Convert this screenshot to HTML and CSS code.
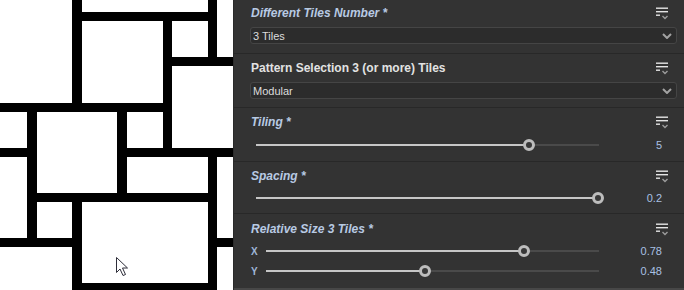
FILE: index.html
```html
<!DOCTYPE html>
<html lang="en">
<head>
    <meta charset="UTF-8">
    <meta name="viewport" content="width=device-width, initial-scale=1.0">
    <title>Tile Generator Parameters</title>
    <link rel="stylesheet" href="styles.css">
</head>
<body>
    <div class="viewport">
        <svg class="pattern" width="233" height="290" viewBox="0 0 233 290">
            <rect x="0" y="0" width="233" height="290" fill="#fff"/>
            <g fill="#000">
                <rect x="72" y="0" width="10" height="112"/>
                <rect x="82" y="12" width="135" height="9"/>
                <rect x="208" y="0" width="9" height="66"/>
                <rect x="163" y="21" width="9" height="136"/>
                <rect x="172" y="57" width="61" height="9"/>
                <rect x="0" y="103" width="172" height="9"/>
                <rect x="27" y="103" width="10" height="144"/>
                <rect x="117" y="103" width="10" height="99"/>
                <rect x="0" y="148" width="27" height="9"/>
                <rect x="127" y="148" width="106" height="9"/>
                <rect x="27" y="193" width="190" height="9"/>
                <rect x="208" y="148" width="9" height="142"/>
                <rect x="72" y="193" width="10" height="97"/>
                <rect x="0" y="238" width="82" height="9"/>
                <rect x="217" y="238" width="16" height="9"/>
                <rect x="72" y="283" width="145" height="7"/>
            </g>
            <!-- mouse pointer -->
            <path d="M116.5 257.5 L116.5 272.5 L120 269 L123 275.5 L125.5 274.5 L122.5 268 L127.5 268 Z" fill="#fff" stroke="#2e2e3a" stroke-width="1"/>
        </svg>
    </div>

    <div class="panel">
        <section class="param param-first">
            <div class="param-head">
                <span class="param-title modified">Different Tiles Number *</span>
                <svg class="menu-icon" width="13" height="13" viewBox="0 0 13 13"><rect x="0" y="0.5" width="12" height="1.4"/><rect x="0" y="4" width="12" height="1.4"/><rect x="0" y="7.5" width="4" height="1.4"/><path d="M6.5 9 L9 11.5 L11.5 9" class="chev"/></svg>
            </div>
            <div class="select">
                <span>3 Tiles</span>
                <svg class="select-arrow" width="10" height="6" viewBox="0 0 10 6"><path d="M1 1 L5 5 L9 1"/></svg>
            </div>
        </section>

        <section class="param">
            <div class="param-head">
                <span class="param-title">Pattern Selection 3 (or more) Tiles</span>
                <svg class="menu-icon" width="13" height="13" viewBox="0 0 13 13"><rect x="0" y="0.5" width="12" height="1.4"/><rect x="0" y="4" width="12" height="1.4"/><rect x="0" y="7.5" width="4" height="1.4"/><path d="M6.5 9 L9 11.5 L11.5 9" class="chev"/></svg>
            </div>
            <div class="select">
                <span>Modular</span>
                <svg class="select-arrow" width="10" height="6" viewBox="0 0 10 6"><path d="M1 1 L5 5 L9 1"/></svg>
            </div>
        </section>

        <section class="param param-slider">
            <div class="param-head">
                <span class="param-title modified">Tiling *</span>
                <svg class="menu-icon" width="13" height="13" viewBox="0 0 13 13"><rect x="0" y="0.5" width="12" height="1.4"/><rect x="0" y="4" width="12" height="1.4"/><rect x="0" y="7.5" width="4" height="1.4"/><path d="M6.5 9 L9 11.5 L11.5 9" class="chev"/></svg>
            </div>
            <div class="slider-row">
                <div class="track"><div class="fill" style="width:79.6%"></div><div class="knob" style="left:79.6%"></div></div>
                <span class="value">5</span>
            </div>
        </section>

        <section class="param param-slider param-short">
            <div class="param-head">
                <span class="param-title modified">Spacing *</span>
                <svg class="menu-icon" width="13" height="13" viewBox="0 0 13 13"><rect x="0" y="0.5" width="12" height="1.4"/><rect x="0" y="4" width="12" height="1.4"/><rect x="0" y="7.5" width="4" height="1.4"/><path d="M6.5 9 L9 11.5 L11.5 9" class="chev"/></svg>
            </div>
            <div class="slider-row">
                <div class="track"><div class="fill" style="width:99.6%"></div><div class="knob" style="left:99.6%"></div></div>
                <span class="value">0.2</span>
            </div>
        </section>

        <section class="param param-slider param-last">
            <div class="param-head">
                <span class="param-title modified">Relative Size 3 Tiles *</span>
                <svg class="menu-icon" width="13" height="13" viewBox="0 0 13 13"><rect x="0" y="0.5" width="12" height="1.4"/><rect x="0" y="4" width="12" height="1.4"/><rect x="0" y="7.5" width="4" height="1.4"/><path d="M6.5 9 L9 11.5 L11.5 9" class="chev"/></svg>
            </div>
            <div class="slider-row slider-labeled">
                <span class="axis">X</span>
                <div class="track"><div class="fill" style="width:77.5%"></div><div class="knob" style="left:77.5%"></div></div>
                <span class="value">0.78</span>
            </div>
            <div class="slider-row slider-labeled">
                <span class="axis">Y</span>
                <div class="track"><div class="fill" style="width:47.7%"></div><div class="knob" style="left:47.7%"></div></div>
                <span class="value">0.48</span>
            </div>
        </section>
        <div class="panel-foot"></div>
    </div>
</body>
</html>
```

FILE: styles.css
```css
html, body {
    margin: 0;
    padding: 0;
}
body {
    display: flex;
    width: 684px;
    height: 290px;
    overflow: hidden;
    font-family: "Liberation Sans", Arial, sans-serif;
    background: #333;
}
.viewport {
    width: 233px;
    height: 290px;
    flex-shrink: 0;
    background: #fff;
}
.pattern {
    display: block;
}
.panel {
    flex: 1;
    display: flex;
    flex-direction: column;
    background: #333333;
    border-left: 1px solid #2a2a2a;
}
.param {
    padding: 6px 7px 8px 16px;
    border-bottom: 1px solid #282828;
}
.param-first {
    padding-top: 5px;
    padding-bottom: 9px;
}
.param-head {
    display: flex;
    align-items: center;
    justify-content: space-between;
    height: 16px;
    padding-right: 8px;
}
.param-title {
    font-size: 12px;
    font-weight: bold;
    color: #e2e2e2;
    padding-left: 1px;
}
.param-title.modified {
    font-style: italic;
    color: #b8cae3;
}
.menu-icon {
    display: block;
    margin-top: 1px;
}
.menu-icon rect {
    fill: #e4e4e4;
}
.menu-icon .chev {
    fill: none;
    stroke: #9c9c9c;
    stroke-width: 1.4;
}
.select {
    display: flex;
    align-items: center;
    justify-content: space-between;
    height: 15px;
    margin-top: 6px;
    padding: 0 4px 0 2px;
    background: #2c2c2c;
    border: 1px solid #454545;
    border-radius: 3px;
    font-size: 11px;
    color: #dcdcdc;
}
.select-arrow path {
    fill: none;
    stroke: #a2a2a2;
    stroke-width: 2;
}
.slider-row {
    display: flex;
    align-items: center;
    height: 14px;
    margin-top: 8px;
    padding-left: 6px;
    padding-right: 15px;
}
.param-short .slider-row {
    margin-top: 7px;
}
.param-slider {
    padding-bottom: 9px;
}
.param-short {
    padding-bottom: 8px;
}
.param-last {
    padding-top: 7px;
    padding-bottom: 9px;
    border-bottom: none;
}
.param-last .slider-row {
    margin-top: 7px;
}
.param-last .slider-row + .slider-row {
    margin-top: 6px;
}
.slider-labeled {
    padding-left: 1px;
}
.axis {
    width: 15px;
    font-size: 10px;
    font-weight: bold;
    color: #9fb6d8;
}
.track {
    position: relative;
    flex: 1;
    height: 2px;
    background: #4a4a4a;
}
.fill {
    height: 2px;
    background: #c6c6c6;
}
.knob {
    position: absolute;
    top: 50%;
    width: 6px;
    height: 6px;
    border: 3px solid #bdbdbd;
    border-radius: 50%;
    background: #383838;
    transform: translate(-50%, -50%);
}
.value {
    width: 63px;
    text-align: right;
    font-size: 11px;
    color: #a9c0e4;
}
.panel-foot {
    height: 3px;
    margin-top: 1px;
    background: #474747;
}
```
